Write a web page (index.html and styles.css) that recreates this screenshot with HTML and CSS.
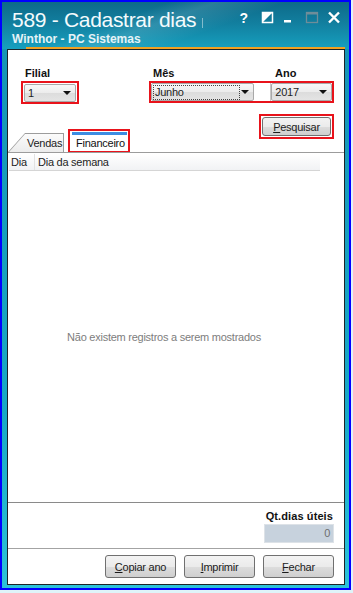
FILE: index.html
```html
<!DOCTYPE html>
<html lang="pt-BR">
<head>
    <meta charset="UTF-8">
    <meta name="viewport" content="width=device-width, initial-scale=1.0">
    <title>589 - Cadastrar dias</title>
    <link rel="stylesheet" href="styles.css">
</head>
<body>
    <div class="window">
        <div class="titlebar">
            <div class="title-row">
                <span class="title">589 - Cadastrar dias</span>
                <span class="caret"></span>
                <svg class="controls" width="110" height="18" viewBox="0 0 110 18">
                    <text x="3.5" y="14.5" font-family="Liberation Sans, sans-serif" font-size="14" font-weight="bold" fill="#ffffff">?</text>
                    <rect x="26.5" y="4.5" width="10" height="10" fill="none" stroke="#ffffff" stroke-width="1.5"/>
                    <polygon points="26,4 37,4 26,15" fill="#ffffff"/>
                    <rect x="48" y="12" width="7" height="2.5" fill="#ffffff"/>
                    <rect x="70.5" y="4.5" width="11" height="10" fill="none" stroke="#6f8d99" stroke-width="1.3"/>
                    <rect x="70" y="4" width="12" height="2.5" fill="#6f8d99"/>
                    <path d="M93 4.5 L103 14.5 M103 4.5 L93 14.5" stroke="#ffffff" stroke-width="2.4"/>
                </svg>
            </div>
            <div class="subtitle">Winthor - PC Sistemas</div>
            <div class="accent"></div>
        </div>

        <div class="frame">
            <div class="content">
                <div class="filters">
                    <div class="field">
                        <label class="field-label">Filial</label>
                        <div class="mark mark-filial">
                            <div class="combo combo-filial"><span>1</span><i class="arrow"></i></div>
                        </div>
                    </div>
                    <div class="field field-period">
                        <div class="period-labels">
                            <label class="field-label label-mes">Mês</label>
                            <label class="field-label">Ano</label>
                        </div>
                        <div class="mark mark-period">
                            <div class="combo combo-mes"><span class="focus">Junho</span><i class="arrow"></i></div>
                            <div class="combo-gap"></div>
                            <div class="combo combo-ano"><span>2017</span><i class="arrow"></i></div>
                        </div>
                    </div>
                </div>

                <div class="tabs-row">
                    <div class="tab tab-off"><div class="tab-face">Vendas</div></div>
                    <div class="mark mark-tab">
                        <div class="tab-on">Financeiro</div>
                    </div>
                    <div class="mark mark-search">
                        <button class="btn btn-search"><u>P</u>esquisar</button>
                    </div>
                </div>

                <div class="grid">
                    <div class="grid-head">
                        <div class="col col-dia">Dia</div>
                        <div class="col col-semana">Dia da semana</div>
                    </div>
                    <div class="grid-empty">Não existem registros a serem mostrados</div>
                </div>

                <div class="summary">
                    <div class="summary-label">Qt.dias úteis</div>
                    <div class="summary-value">0</div>
                </div>

                <div class="actions">
                    <button class="btn"><u>C</u>opiar ano</button>
                    <button class="btn"><u>I</u>mprimir</button>
                    <button class="btn"><u>F</u>echar</button>
                </div>
            </div>
        </div>
    </div>
</body>
</html>
```

FILE: styles.css
```css
body {
    margin: 0;
    background: #dff4f9;
    font-family: "Liberation Sans", Arial, sans-serif;
    font-size: 11px;
    letter-spacing: -0.25px;
    color: #1e1e1e;
}
.window {
    width: 351px;
    height: 590px;
    box-sizing: border-box;
    border: 2px solid #0000ff;
    display: flex;
    flex-direction: column;
    background: linear-gradient(180deg, #1592b2 0%, #18a9c6 70%, #2cc2d8 100%);
}
.titlebar {
    height: 47px;
    flex-shrink: 0;
    display: flex;
    flex-direction: column;
    background:
        linear-gradient(160deg, rgba(255,255,255,0) 35%, rgba(255,255,255,0.12) 45%, rgba(255,255,255,0) 60%),
        linear-gradient(180deg, #0d6a89 0%, #127f9f 45%, #16a0bf 100%);
}
.title-row {
    display: flex;
    align-items: flex-start;
    padding: 6px 0 0 10px;
    height: 26px;
}
.title {
    color: #f4fbfd;
    font-size: 21px;
    line-height: 24px;
    letter-spacing: -0.3px;
}
.caret {
    width: 1px;
    height: 10px;
    margin: 10px 0 0 6px;
    background: rgba(255,255,255,0.45);
}
.controls {
    margin-left: auto;
    margin-top: 0;
    margin-right: 3px;
}
.subtitle {
    color: #e6f3f7;
    font-size: 12px;
    font-weight: bold;
    line-height: 14px;
    letter-spacing: 0;
    padding-left: 10px;
}
.accent {
    height: 2px;
    margin: 1px 4px 0 24px;
    background: #f0a122;
}
.frame {
    flex: 1;
    display: flex;
    padding: 0 4px 3px 5px;
    min-height: 0;
}
.content {
    flex: 1;
    display: flex;
    flex-direction: column;
    background: #ffffff;
    border: 1px solid #1b2428;
}

/* filters */
.filters {
    height: 48px;
    padding: 16px 0 0 13px;
    display: flex;
    align-items: flex-start;
}
.field {
    display: flex;
    flex-direction: column;
}
.field-label {
    font-weight: bold;
    font-size: 11px;
    line-height: 15px;
    letter-spacing: 0;
    padding-left: 4px;
    color: #111;
}
.field-period {
    margin-left: 70px;
}
.period-labels {
    display: flex;
}
.label-mes {
    width: 118px;
}
.mark {
    border: 2px solid #e8131b;
    box-sizing: border-box;
}
.mark-filial {
    width: 58px;
    height: 23px;
    padding: 1px;
}
.mark-period {
    width: 185px;
    height: 22px;
    padding: 0;
    display: flex;
}
.combo {
    box-sizing: border-box;
    height: 18px;
    display: flex;
    align-items: center;
    border: 1px solid #a9a9a9;
    border-radius: 2px;
    background: linear-gradient(180deg, #f7f7f7 0%, #ececec 50%, #dcdcdc 51%, #e4e4e4 100%);
    padding: 0 4px 0 3px;
}
.combo span {
    flex: 1;
}
.combo-filial {
    width: 52px;
}
.combo-mes {
    width: 104px;
    padding-left: 1px;
}
.combo-mes .focus {
    flex: 0 0 auto;
    width: 84px;
    line-height: 13px;
    border: 1px dotted #444;
    padding-left: 1px;
}
.combo-gap {
    width: 16px;
    border-right: 1px solid #c8c8c8;
}
.combo-ano {
    width: 61px;
}
.arrow {
    width: 0;
    height: 0;
    border-left: 4px solid transparent;
    border-right: 4px solid transparent;
    border-top: 4px solid #111;
    margin-left: 4px;
}
.combo-mes .arrow {
    margin-left: auto;
}

/* tabs */
.tabs-row {
    height: 38px;
    display: flex;
    align-items: flex-end;
}
.tab-off {
    width: 56px;
    height: 19px;
    background: #9c9c9c;
    clip-path: polygon(0 100%, 17px 0, 100% 0, 100% 100%);
    display: flex;
}
.tab-face {
    flex: 1;
    margin: 1px 1px 0 1px;
    background: linear-gradient(180deg, #fbfbfb 0%, #ececec 100%);
    clip-path: polygon(0 100%, 16px 0, 100% 0, 100% 100%);
    padding-left: 18px;
    line-height: 18px;
    color: #222;
}
.mark-tab {
    margin-left: 4px;
    width: 62px;
    height: 24px;
    padding: 1px 1px 0 2px;
    margin-bottom: -1px;
    background: #fff;
}
.tab-on {
    height: 100%;
    box-sizing: border-box;
    border-top: 3px solid #3d8de2;
    padding-left: 4px;
    line-height: 16px;
    color: #111;
}
.mark-search {
    margin-left: auto;
    margin-right: 10px;
    align-self: flex-start;
    width: 75px;
    height: 25px;
    padding: 1px;
}
.btn {
    box-sizing: border-box;
    height: 23px;
    width: 71px;
    padding: 0;
    font-family: "Liberation Sans", Arial, sans-serif;
    font-size: 11px;
    letter-spacing: -0.25px;
    color: #1b1b1b;
    border: 1px solid #707070;
    border-radius: 3px;
    background: linear-gradient(180deg, #f3f3f3 0%, #ebebeb 50%, #dddddd 51%, #cfcfcf 100%);
}
.btn-search {
    width: 69px;
    height: 19px;
}

/* grid */
.grid {
    height: 351px;
    box-sizing: border-box;
    border-top: 1px solid #9c9c9c;
    border-bottom: 1px solid #8a8a8a;
    display: flex;
    flex-direction: column;
}
.grid-head {
    width: 311px;
    height: 17px;
    margin: 1px 0 0 1px;
    display: flex;
    background: linear-gradient(180deg, #ffffff 0%, #f1f2f4 100%);
    border-bottom: 1px solid #d5d5d5;
    box-sizing: border-box;
}
.col {
    line-height: 16px;
    padding-left: 2px;
    color: #1e1e1e;
}
.col-dia {
    width: 23px;
    border-right: 1px solid #e2e2e2;
}
.col-semana {
    padding-left: 3px;
}
.grid-empty {
    flex: 1;
    width: 312px;
    display: flex;
    align-items: center;
    justify-content: center;
    color: #7d7d7d;
}

/* summary */
.summary {
    height: 46px;
    box-sizing: border-box;
    border-bottom: 1px solid #a3a3a3;
    display: flex;
    flex-direction: column;
    align-items: flex-end;
    padding: 6px 10px 0 0;
}
.summary-label {
    font-weight: bold;
    line-height: 14px;
    letter-spacing: 0.1px;
    padding-right: 1px;
    color: #111;
}
.summary-value {
    width: 70px;
    height: 19px;
    box-sizing: border-box;
    margin-top: 1px;
    background: #c7d2dd;
    border: 1px solid #dde2e7;
    text-align: right;
    line-height: 17px;
    padding-right: 3px;
    color: #6f6f6f;
}

/* buttons */
.actions {
    flex: 1;
    display: flex;
    justify-content: flex-end;
    align-items: flex-start;
    gap: 8px;
    padding: 6px 10px 0 0;
}
```
